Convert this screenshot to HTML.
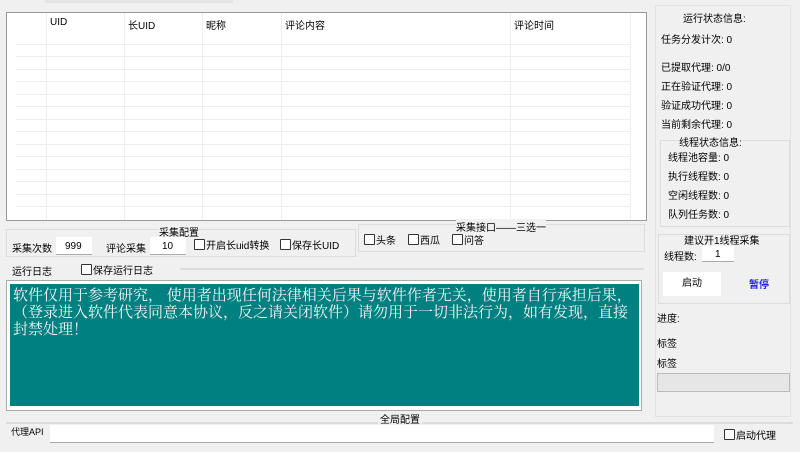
<!DOCTYPE html>
<html><head><meta charset="utf-8"><style>
body{margin:0;width:800px;height:452px;background:#f0f0f0;position:relative;overflow:hidden;font-family:"Liberation Sans","Noto Sans CJK SC",sans-serif;font-size:10px;color:#000}
.a{position:absolute;white-space:nowrap}
.cb{display:inline-block;width:9px;height:9px;border:1px solid #333;background:#fff;vertical-align:-1px;margin-right:1px;border-radius:1px}
.in{position:absolute;background:#fff;border-bottom:1px solid #aaa}
.grp{position:absolute;border:1px solid #dcdcdc}
</style></head><body>
<div class="a" style="left:45px;top:0;width:188px;height:3px;background:#e4e4e4"></div>
<div class="a" style="left:6px;top:12px;width:639px;height:207px;background:#fff;border:1px solid #999"></div>
<svg class="a" style="left:7px;top:13px" width="638" height="207">
<g stroke="#eee" stroke-width="1">
<line x1="39.5" y1="0" x2="39.5" y2="207"/><line x1="117.5" y1="0" x2="117.5" y2="207"/><line x1="195.5" y1="0" x2="195.5" y2="207"/><line x1="274.5" y1="0" x2="274.5" y2="207"/><line x1="503.5" y1="0" x2="503.5" y2="207"/><line x1="623.5" y1="0" x2="623.5" y2="207"/>
<line x1="9" y1="31.5" x2="624" y2="31.5"/><line x1="9" y1="43.5" x2="624" y2="43.5"/><line x1="9" y1="56.5" x2="624" y2="56.5"/><line x1="9" y1="68.5" x2="624" y2="68.5"/><line x1="9" y1="81.5" x2="624" y2="81.5"/><line x1="9" y1="93.5" x2="624" y2="93.5"/><line x1="9" y1="106.5" x2="624" y2="106.5"/><line x1="9" y1="118.5" x2="624" y2="118.5"/><line x1="9" y1="131.5" x2="624" y2="131.5"/><line x1="9" y1="143.5" x2="624" y2="143.5"/><line x1="9" y1="156.5" x2="624" y2="156.5"/><line x1="9" y1="168.5" x2="624" y2="168.5"/><line x1="9" y1="181.5" x2="624" y2="181.5"/><line x1="9" y1="193.5" x2="624" y2="193.5"/>
</g></svg>
<div class="a" style="left:50px;top:17px">UID</div>
<div class="a" style="left:128px;top:17px">长UID</div>
<div class="a" style="left:206px;top:17px">昵称</div>
<div class="a" style="left:285px;top:17px">评论内容</div>
<div class="a" style="left:514px;top:17px">评论时间</div>
<div class="grp" style="left:6px;top:229px;width:348px;height:26px"></div>
<div class="a" style="left:159px;top:224px;background:#f0f0f0">采集配置</div>
<div class="a" style="left:12px;top:240px">采集次数</div>
<div class="in" style="left:56px;top:237px;width:36px;height:17px"></div>
<div class="a" style="left:65px;top:241px">999</div>
<div class="a" style="left:106px;top:240px">评论采集</div>
<div class="in" style="left:150px;top:237px;width:36px;height:17px"></div>
<div class="a" style="left:162px;top:241px">10</div>
<div class="a" style="left:194px;top:237px"><span class="cb"></span>开启长uid转换</div>
<div class="a" style="left:280px;top:237px"><span class="cb"></span>保存长UID</div>
<div class="grp" style="left:358px;top:224px;width:285px;height:26px"></div>
<div class="a" style="left:456px;top:219px;background:#f0f0f0">采集接口——三选一</div>
<div class="a" style="left:364px;top:232px"><span class="cb"></span>头条</div>
<div class="a" style="left:408px;top:232px"><span class="cb"></span>西瓜</div>
<div class="a" style="left:452px;top:232px"><span class="cb"></span>问答</div>
<div class="a" style="left:12px;top:263px">运行日志</div>
<div class="a" style="left:81px;top:262px"><span class="cb"></span>保存运行日志</div>
<div class="grp" style="left:180px;top:268px;width:462px;height:0"></div>
<div class="a" style="left:6px;top:280px;width:634px;height:129px;border:1px solid #aaa;background:#fff"></div>
<div class="a" style="left:10px;top:284px;width:629px;height:122px;background:#008080;color:#f4f4f4;font-family:'Liberation Serif','Noto Serif CJK SC',serif;font-size:15px;line-height:17px;white-space:normal;padding:4px 2px 0 3px;box-sizing:border-box">软件仅用于参考研究， 使用者出现任何法律相关后果与软件作者无关，使用者自行承担后果，（登录进入软件代表同意本协议，反之请关闭软件）请勿用于一切非法行为，如有发现，直接封禁处理！</div>
<div class="grp" style="left:6px;top:422px;width:785px;height:0"></div>
<div class="a" style="left:378px;top:411px;background:#f0f0f0;padding:0 2px">全局配置</div>
<div class="a" style="left:11px;top:425px;font-size:9px">代理API</div>
<div class="in" style="left:50px;top:425px;width:664px;height:17px"></div>
<div class="a" style="left:724px;top:427px"><span class="cb"></span>启动代理</div>
<div class="grp" style="left:655px;top:5px;width:134px;height:410px;border-color:#e2e2e2"></div>
<div class="a" style="left:683px;top:10px">运行状态信息:</div>
<div class="a" style="left:661px;top:31px">任务分发计次: 0</div>
<div class="a" style="left:661px;top:59px">已提取代理: 0/0</div>
<div class="a" style="left:661px;top:78px">正在验证代理: 0</div>
<div class="a" style="left:661px;top:97px">验证成功代理: 0</div>
<div class="a" style="left:661px;top:116px">当前剩余代理: 0</div>
<div class="grp" style="left:660px;top:140px;width:128px;height:85px"></div>
<div class="a" style="left:679px;top:134px;background:#f0f0f0">线程状态信息:</div>
<div class="a" style="left:668px;top:149px">线程池容量: 0</div>
<div class="a" style="left:668px;top:168px">执行线程数: 0</div>
<div class="a" style="left:668px;top:187px">空闲线程数: 0</div>
<div class="a" style="left:668px;top:206px">队列任务数: 0</div>
<div class="grp" style="left:658px;top:234px;width:130px;height:68px"></div>
<div class="a" style="left:684px;top:232px">建议开1线程采集</div>
<div class="a" style="left:664px;top:248px">线程数:</div>
<div class="in" style="left:702px;top:246px;width:32px;height:15px"></div>
<div class="a" style="left:715px;top:249px">1</div>
<div class="a" style="left:663px;top:272px;width:58px;height:24px;background:#fff;border-radius:2px;text-align:center;line-height:24px">启动</div>
<div class="a" style="left:749px;top:276px;color:#2222dd;font-weight:bold">暂停</div>
<div class="a" style="left:657px;top:310px">进度:</div>
<div class="a" style="left:657px;top:335px">标签</div>
<div class="a" style="left:657px;top:355px">标签</div>
<div class="a" style="left:657px;top:373px;width:131px;height:17px;background:#e6e6e6;border:1px solid #bcbcbc"></div>
</body></html>
